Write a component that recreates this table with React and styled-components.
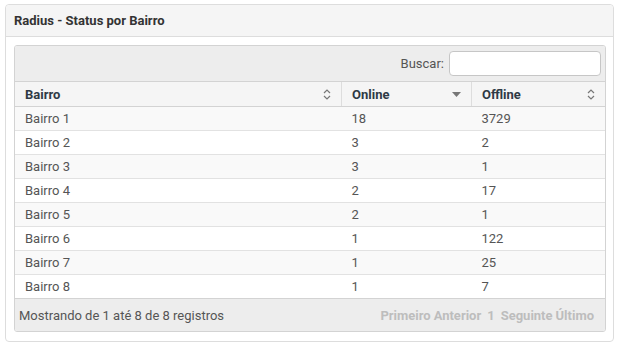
import styled, { createGlobalStyle } from "styled-components";

const GlobalStyle = createGlobalStyle`
  body {
    margin: 0;
    background: #fff;
    font-family: Roboto, "Liberation Sans", sans-serif;
    font-size: 13px;
    color: #555;
  }
`;

const Panel = styled.div`
  margin: 4px 0 0 5px;
  width: 607px;
  border: 1px solid #ddd;
  border-radius: 4px;
  background: #fff;
`;

const PanelHeading = styled.div`
  height: 31px;
  display: flex;
  align-items: center;
  padding: 0 8px;
  background: #f5f5f5;
  border-bottom: 1px solid #ddd;
  border-radius: 4px 4px 0 0;
  font-weight: 700;
  font-size: 13px;
  color: #333;
`;

const PanelBody = styled.div`
  padding: 8px 7px 9px 8px;
`;

const Wrapper = styled.div`
  border: 1px solid #d3d3d3;
  border-radius: 3px;
  overflow: hidden;
`;

const Toolbar = styled.div`
  height: 35px;
  display: flex;
  align-items: center;
  justify-content: flex-end;
  gap: 5px;
  padding-right: 4px;
  background: #ededed;
  border-bottom: 1px solid #d3d3d3;
`;

const Label = styled.label`
  color: #555;
`;

const Search = styled.input`
  width: 138px;
  height: 23px;
  padding: 0 6px;
  border: 1px solid #c6c6c6;
  border-radius: 4px;
  background: #fff;
  outline: none;
  box-sizing: content-box;
`;

const Table = styled.table`
  width: 100%;
  border-collapse: collapse;
  table-layout: fixed;
`;

const Th = styled.th`
  height: 24px;
  padding: 0 10px;
  text-align: left;
  font-weight: 700;
  color: #2f3a45;
  background: #f5f5f5;
  border-bottom: 1px solid #d3d3d3;
  border-left: ${(p) => (p.$first ? "none" : "1px solid #ddd")};
  width: ${(p) => (p.$w ? `${p.$w}px` : "auto")};
`;

const ThInner = styled.div`
  display: flex;
  align-items: center;
  justify-content: space-between;
`;

const Td = styled.td`
  height: 23px;
  padding: 0 10px;
  border-top: ${(p) => (p.$first ? "none" : "1px solid #e2e2e2")};
  background: ${(p) => (p.$odd ? "#f9f9f9" : "#fff")};
  color: #555;
`;

const Footer = styled.div`
  height: 32px;
  display: flex;
  align-items: center;
  justify-content: space-between;
  padding: 0 11px 0 4px;
  background: #ededed;
  border-top: 1px solid #d3d3d3;
`;

const Pager = styled.div`
  display: flex;
  gap: 3px;
  font-weight: 700;
  color: #bdbdbd;
`;

const PageNum = styled.span`
  margin: 0 3px;
`;

const SortBoth = () => (
  <svg width="8" height="11" viewBox="0 0 8 11">
    <path d="M1 4 L4 1 L7 4 M1 7 L4 10 L7 7" fill="none" stroke="#777" strokeWidth="1.2" />
  </svg>
);

const SortDesc = () => (
  <svg width="9" height="5" viewBox="0 0 9 5">
    <path d="M0 0 H9 L4.5 5 Z" fill="#777" />
  </svg>
);

const rows = [
  ["Bairro 1", 18, 3729],
  ["Bairro 2", 3, 2],
  ["Bairro 3", 3, 1],
  ["Bairro 4", 2, 17],
  ["Bairro 5", 2, 1],
  ["Bairro 6", 1, 122],
  ["Bairro 7", 1, 25],
  ["Bairro 8", 1, 7],
];

export default function App() {
  return (
    <>
      <GlobalStyle />
      <Panel>
        <PanelHeading>Radius - Status por Bairro</PanelHeading>
        <PanelBody>
          <Wrapper>
            <Toolbar>
              <Label>Buscar:</Label>
              <Search type="text" />
            </Toolbar>
            <Table>
              <thead>
                <tr>
                  <Th $first $w={306}>
                    <ThInner>Bairro <SortBoth /></ThInner>
                  </Th>
                  <Th $w={109}>
                    <ThInner>Online <SortDesc /></ThInner>
                  </Th>
                  <Th>
                    <ThInner>Offline <SortBoth /></ThInner>
                  </Th>
                </tr>
              </thead>
              <tbody>
                {rows.map((r, i) => (
                  <tr key={r[0]}>
                    {r.map((c, j) => (
                      <Td key={j} $first={i === 0} $odd={i % 2 === 0}>{c}</Td>
                    ))}
                  </tr>
                ))}
              </tbody>
            </Table>
            <Footer>
              <span>Mostrando de 1 até 8 de 8 registros</span>
              <Pager>
                <span>Primeiro</span>
                <span>Anterior</span>
                <PageNum>1</PageNum>
                <span>Seguinte</span>
                <span>Último</span>
              </Pager>
            </Footer>
          </Wrapper>
        </PanelBody>
      </Panel>
    </>
  );
}
